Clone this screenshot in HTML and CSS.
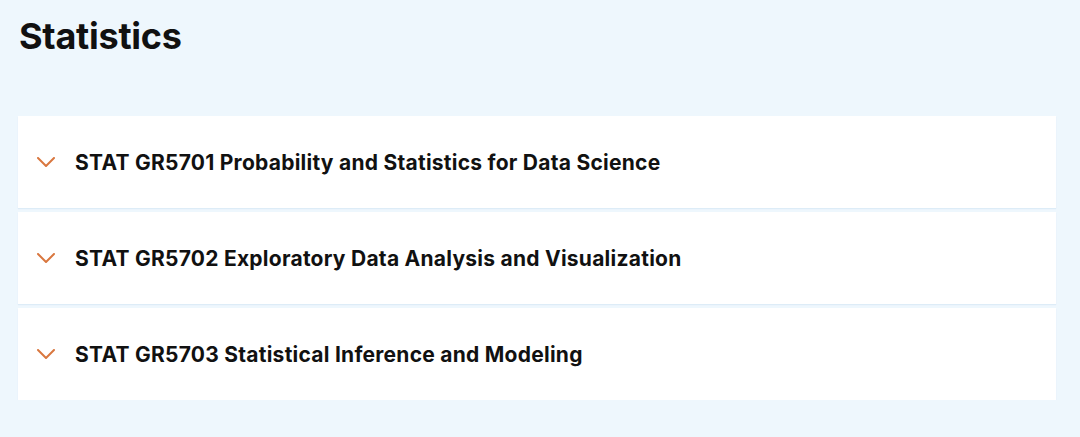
FILE: index.html
```html
<!DOCTYPE html>
<html lang="en">
<head>
<meta charset="utf-8">
<title>Statistics</title>
<link rel="stylesheet" href="styles.css">
</head>
<body>
<main class="page">
  <h1 class="title">Statistics</h1>
  <div class="accordion">
    <div class="item">
      <svg class="chev" viewBox="0 0 18 10" width="18" height="10"><path d="M1 1 L9 9 L17 1" fill="none" stroke="#d9773f" stroke-width="2" stroke-linecap="round" stroke-linejoin="round"/></svg>
      <span class="label">STAT GR5701 Probability and Statistics for Data Science</span>
    </div>
    <div class="item">
      <svg class="chev" viewBox="0 0 18 10" width="18" height="10"><path d="M1 1 L9 9 L17 1" fill="none" stroke="#d9773f" stroke-width="2" stroke-linecap="round" stroke-linejoin="round"/></svg>
      <span class="label">STAT GR5702 Exploratory Data Analysis and Visualization</span>
    </div>
    <div class="item">
      <svg class="chev" viewBox="0 0 18 10" width="18" height="10"><path d="M1 1 L9 9 L17 1" fill="none" stroke="#d9773f" stroke-width="2" stroke-linecap="round" stroke-linejoin="round"/></svg>
      <span class="label">STAT GR5703 Statistical Inference and Modeling</span>
    </div>
  </div>
</main>
</body>
</html>
```
FILE: styles.css
```css
html, body {
  margin: 0;
  padding: 0;
  background: #eef7fd;
}
body {
  font-family: Inter, "Open Sans", Arial, sans-serif;
  color: #111;
  font-variant-ligatures: none;
}
.page {
  padding: 11px 24px 0 18px;
}
.title {
  margin: 0;
  font-size: 36px;
  font-weight: 700;
  line-height: 50px;
  padding-left: 1px;
  letter-spacing: -0.25px;
}
.accordion {
  margin-top: 55px;
  display: flex;
  flex-direction: column;
  gap: 4px;
}
.item {
  background: #fff;
  height: 92px;
  display: flex;
  align-items: center;
  padding-left: 19px;
  box-shadow: 0 1px 1px rgba(190, 215, 235, 0.35);
}
.chev {
  flex: none;
  margin-right: 20px;
}
.label {
  font-size: 21px;
  font-weight: 700;
  letter-spacing: 0.25px;
  color: #111;
}
```
